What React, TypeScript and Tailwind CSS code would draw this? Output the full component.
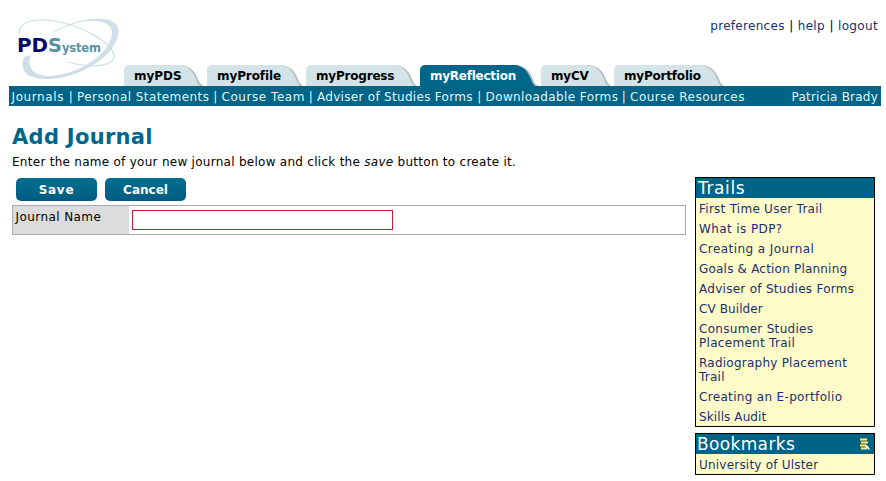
import React from "react";

const tabs = [
  { label: "myPDS", box: "w-[79px] mr-1", text: "tracking-[0px]" },
  { label: "myProfile", box: "w-[96px] mr-[3px]", text: "tracking-[-0.1px]" },
  { label: "myProgress", box: "w-[111px] mr-[3px]", text: "tracking-[-0.2px]" },
  { label: "myReflection", box: "w-[118px] mr-[3px]", text: "tracking-[-0.25px]", active: true },
  { label: "myCV", box: "w-[70px] mr-[3px]", text: "tracking-[-0.2px]" },
  { label: "myPortfolio", box: "w-[110px]", text: "tracking-[-0.2px]" },
];

const sections = [
  { label: "Journals", box: "w-[53px] tracking-[0.6px]" },
  { label: "Personal Statements", box: "w-[132px] tracking-[0.43px]" },
  { label: "Course Team", box: "w-[83px] tracking-[0.55px]" },
  { label: "Adviser of Studies Forms", box: "w-[156px] tracking-[0.3px]" },
  { label: "Downloadable Forms", box: "w-[132px] tracking-[0.4px]" },
  { label: "Course Resources", box: "w-[115px] tracking-[0.5px]" },
];

const trails = [
  { lines: ["First Time User Trail"], text: "tracking-[0.26px]" },
  { lines: ["What is PDP?"], text: "tracking-[0.4px]" },
  { lines: ["Creating a Journal"], text: "tracking-[0.43px]" },
  { lines: ["Goals & Action Planning"], text: "tracking-[0.2px]" },
  { lines: ["Adviser of Studies Forms"], text: "tracking-[0.28px]" },
  { lines: ["CV Builder"], text: "tracking-[0.1px]" },
  { lines: ["Consumer Studies", "Placement Trail"], text: "tracking-[0.3px]" },
  { lines: ["Radiography Placement", "Trail"], text: "tracking-[0.24px]" },
  { lines: ["Creating an E-portfolio"], text: "tracking-[0.33px]" },
  { lines: ["Skills Audit"], text: "tracking-[0.1px]" },
];

function Logo() {
  return (
    <svg className="mt-[18px] ml-[17px] block h-[64px] w-[104px] shrink-0" viewBox="17 18 104 64">
      <path
        fillRule="evenodd"
        fill="#cfdfe6"
        d="M48 35C64 24 87 17 104 19C120 21 122 32 114 45C104 63 73 79 48 79C26 79 19 70 24 57L31 55C26 67 33 75 48 76C70 76 98 62 108 45C116 32 112 23 98 21C83 19 65 26 48 35Z"
      />
      <path
        d="M19 34C18 21 37 17 60 22C86 28 111 43 114 54C117 66 94 69 68 62"
        fill="none"
        stroke="#cfdfe6"
        strokeWidth="1.2"
      />
      <g fontFamily="'DejaVu Sans', sans-serif" fontWeight="bold">
        <text x="17" y="52" fontSize="19" fill="#08086b" textLength="31" lengthAdjust="spacingAndGlyphs">PD</text>
        <text x="48" y="52" fontSize="19" fill="#5792a3" textLength="14" lengthAdjust="spacingAndGlyphs">S</text>
        <text x="62" y="52" fontSize="11.5" fill="#5792a3" textLength="39" lengthAdjust="spacing">ystem</text>
      </g>
    </svg>
  );
}

function Tab({ label, box, text, active }: { label: string; box: string; text: string; active?: boolean }) {
  return (
    <div className={`flex h-[21px] ${box}`}>
      <div
        className={`h-full min-w-0 flex-1 rounded-tl-[5px] pl-[10px] text-[12px] leading-[23px] font-bold whitespace-nowrap ${text} ${
          active ? "bg-[#00668a] text-white" : "bg-[#d3e3e8] text-black"
        }`}
      >
        <span className="relative">{label}</span>
      </div>
      <svg className="h-[21px] w-[26px] shrink-0" viewBox="0 0 26 21">
        <path d="M0 0H4C14 1 18 7 21 14C22 17 23 19 26 21H0Z" fill="#b4bdc1" />
        <path d="M0 0H3C12 1 16 7 19 14C20 17 21 19 23 21H0Z" fill={active ? "#00668a" : "#d3e3e8"} />
      </svg>
    </div>
  );
}

function ActionButton({ children, text }: { children: string; text: string }) {
  return (
    <button
      className={`h-[23px] w-[81px] rounded-[5px] bg-linear-to-b from-[#006f91] to-[#005c80] pt-px text-[12px] leading-[22px] font-bold text-white ${text}`}
    >
      {children}
    </button>
  );
}

function BookmarkIcon() {
  return (
    <svg className="h-[12px] w-[12px]" viewBox="0 0 12 12">
      <path d="M1 1H9V11H1Z" fill="#3c5a2c" />
      <path d="M1 1.5H8M2 4.5H9M1 7.5H7M2 10.5H8" stroke="#f5ef8b" strokeWidth="1.8" />
      <path d="M6 6L10 9L9.5 9.5L11 11L10 12L8.5 10.5L7 11Z" fill="#fff" />
    </svg>
  );
}

export default function App() {
  return (
    <div className="h-[481px] w-[886px] overflow-hidden bg-white font-['DejaVu_Sans',Verdana,sans-serif] text-[12px] text-black">
      <header className="flex h-[86px]">
        <Logo />
        <div className="flex flex-1 flex-col justify-between pl-[3px]">
          <div className="mt-[18px] flex justify-end gap-[4.5px] pr-[8px] leading-[16px] text-[#17306f]">
            <a className="tracking-[0.3px]">preferences</a>
            <span className="text-black">|</span>
            <a className="tracking-[0.3px]">help</a>
            <span className="text-black">|</span>
            <a className="tracking-[0.35px]">logout</a>
          </div>
          <div className="flex">
            {tabs.map((t) => (
              <Tab key={t.label} {...t} />
            ))}
          </div>
        </div>
      </header>

      <nav className="ml-[9px] flex h-[20px] w-[872px] justify-between bg-[#006486] pr-[3px] pl-[2.5px] leading-[22px] whitespace-nowrap text-[#e4f4f8]">
        <div className="flex">
          {sections.map((s, i) => (
            <React.Fragment key={s.label}>
              {i > 0 && <span className="w-[12.5px] text-center">|</span>}
              <a className={s.box}>{s.label}</a>
            </React.Fragment>
          ))}
        </div>
        <span className="tracking-[0.22px]">Patricia Brady</span>
      </nav>

      <div className="flex justify-between pr-[11px] pl-[12px]">
        <main className="w-[674px]">
          <h1 className="mt-[18px] h-[26px] text-[21px] leading-[27px] font-bold tracking-[0.3px] text-[#00668a]">
            Add Journal
          </h1>
          <p className="mt-[3px] h-[17px] leading-[18px] tracking-[0.275px]">
            Enter the name of your new journal below and click the <em>save</em> button to create it.
          </p>
          <div className="mt-[8px] flex gap-[8px] pl-[4px]">
            <ActionButton text="tracking-[0.7px]">Save</ActionButton>
            <ActionButton text="tracking-[0px]">Cancel</ActionButton>
          </div>
          <div className="mt-[4px] flex h-[30px] border border-[#aaaab2]">
            <label className="w-[116px] bg-[#dcdcdc] pl-[2.5px] leading-[22px] tracking-[0.42px]">Journal Name</label>
            <input className="mt-[4px] ml-[3px] h-[20px] w-[261px] border border-[#c51f35] bg-white outline-none" />
          </div>
        </main>

        <aside className="mt-[71px] w-[180px]">
          <section className="h-[250px] border border-black bg-[#fffbc8]">
            <h2 className="h-[20px] bg-[#006486] pl-[2px] text-[17px] leading-[20px] tracking-[0.6px] text-white">
              Trails
            </h2>
            <ul className="pl-[3px] leading-[14px] text-[#17306f]">
              {trails.map(({ lines, text }) => (
                <li key={lines[0]} className={`pt-[4px] pb-[2px] ${text}`}>
                  {lines.map((line) => (
                    <div key={line}>{line}</div>
                  ))}
                </li>
              ))}
            </ul>
          </section>
          <section className="mt-[6px] h-[42px] border border-black bg-[#fffbc8]">
            <h2 className="flex h-[20px] items-center justify-between bg-[#006486] pr-[3px] pl-px text-[17px] leading-[20px] tracking-[0.35px] text-white">
              Bookmarks
              <BookmarkIcon />
            </h2>
            <div className="pt-[4px] pb-[2px] pl-[3px] leading-[14px] tracking-[0.21px] text-[#17306f]">
              University of Ulster
            </div>
          </section>
        </aside>
      </div>
    </div>
  );
}
